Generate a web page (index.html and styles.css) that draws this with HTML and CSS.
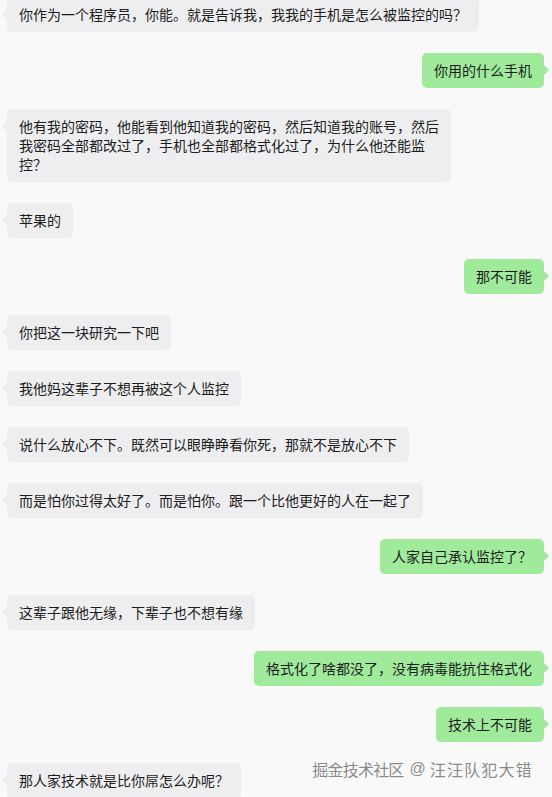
FILE: index.html
```html
<!DOCTYPE html>
<html lang="zh-CN">
<head>
<meta charset="utf-8">
<title>聊天记录</title>
<link rel="stylesheet" href="styles.css">
</head>
<body>
<div class="chat">
  <div class="row in"><div class="bubble">你作为一个程序员，你能。就是告诉我，我我的手机是怎么被监控的吗？</div></div>
  <div class="row out"><div class="bubble">你用的什么手机</div></div>
  <div class="row in"><div class="bubble">他有我的密码，他能看到他知道我的密码，然后知道我的账号，然后<br>我密码全部都改过了，手机也全部都格式化过了，为什么他还能监<br>控？</div></div>
  <div class="row in"><div class="bubble">苹果的</div></div>
  <div class="row out"><div class="bubble">那不可能</div></div>
  <div class="row in"><div class="bubble">你把这一块研究一下吧</div></div>
  <div class="row in"><div class="bubble">我他妈这辈子不想再被这个人监控</div></div>
  <div class="row in"><div class="bubble">说什么放心不下。既然可以眼睁睁看你死，那就不是放心不下</div></div>
  <div class="row in"><div class="bubble">而是怕你过得太好了。而是怕你。跟一个比他更好的人在一起了</div></div>
  <div class="row out"><div class="bubble">人家自己承认监控了？</div></div>
  <div class="row in"><div class="bubble">这辈子跟他无缘，下辈子也不想有缘</div></div>
  <div class="row out"><div class="bubble">格式化了啥都没了，没有病毒能抗住格式化</div></div>
  <div class="row out"><div class="bubble">技术上不可能</div></div>
  <div class="row in"><div class="bubble">那人家技术就是比你屌怎么办呢？</div></div>
</div>
<div class="watermark"><span class="wm-site">掘金技术社区</span><span class="wm-at">@</span><span class="wm-name">汪汪队犯大错</span></div>
</body>
</html>
```

FILE: styles.css
```css
html, body {
  margin: 0;
  padding: 0;
  background: #f9f9f9;
  overflow: hidden;
}
body {
  width: 552px;
  height: 797px;
  position: relative;
  font-family: "Noto Sans CJK SC", "Noto Sans", sans-serif;
  color: #1c1c1c;
}
.chat {
  display: flex;
  flex-direction: column;
  gap: 21px;
  padding: 0 8px 0 7px;
  margin-top: -3px;
}
.row {
  display: flex;
}
.row.in { justify-content: flex-start; }
.row.out { justify-content: flex-end; }
.bubble {
  position: relative;
  font-size: 14px;
  line-height: 19px;
  padding: 8px 12px;
  border-radius: 5px;
  white-space: nowrap;
}
.in .bubble { background: #eeeef0; }
.out .bubble { background: #9fea9b; }
.bubble::before {
  content: "";
  position: absolute;
  top: 12px;
  width: 0;
  height: 0;
  border-top: 5px solid transparent;
  border-bottom: 5px solid transparent;
}
.in .bubble::before {
  left: -5px;
  border-right: 5px solid #eeeef0;
}
.out .bubble::before {
  right: -5px;
  border-left: 5px solid #9fea9b;
}
.watermark {
  position: absolute;
  right: 19px;
  top: 758px;
  display: flex;
  align-items: center;
  font-family: "Noto Sans CJK SC", sans-serif;
  font-size: 16px;
  line-height: 22px;
  color: #8a8a8a;
  text-shadow: 0 0 1px #ffffff, 1px 1px 0 rgba(255,255,255,0.7);
  white-space: nowrap;
}
.wm-site {
  letter-spacing: -0.8px;
}
.wm-at {
  font-family: "Liberation Sans", sans-serif;
  margin: 0 4px 0 6px;
}
.wm-name {
  letter-spacing: 1.2px;
}
```
